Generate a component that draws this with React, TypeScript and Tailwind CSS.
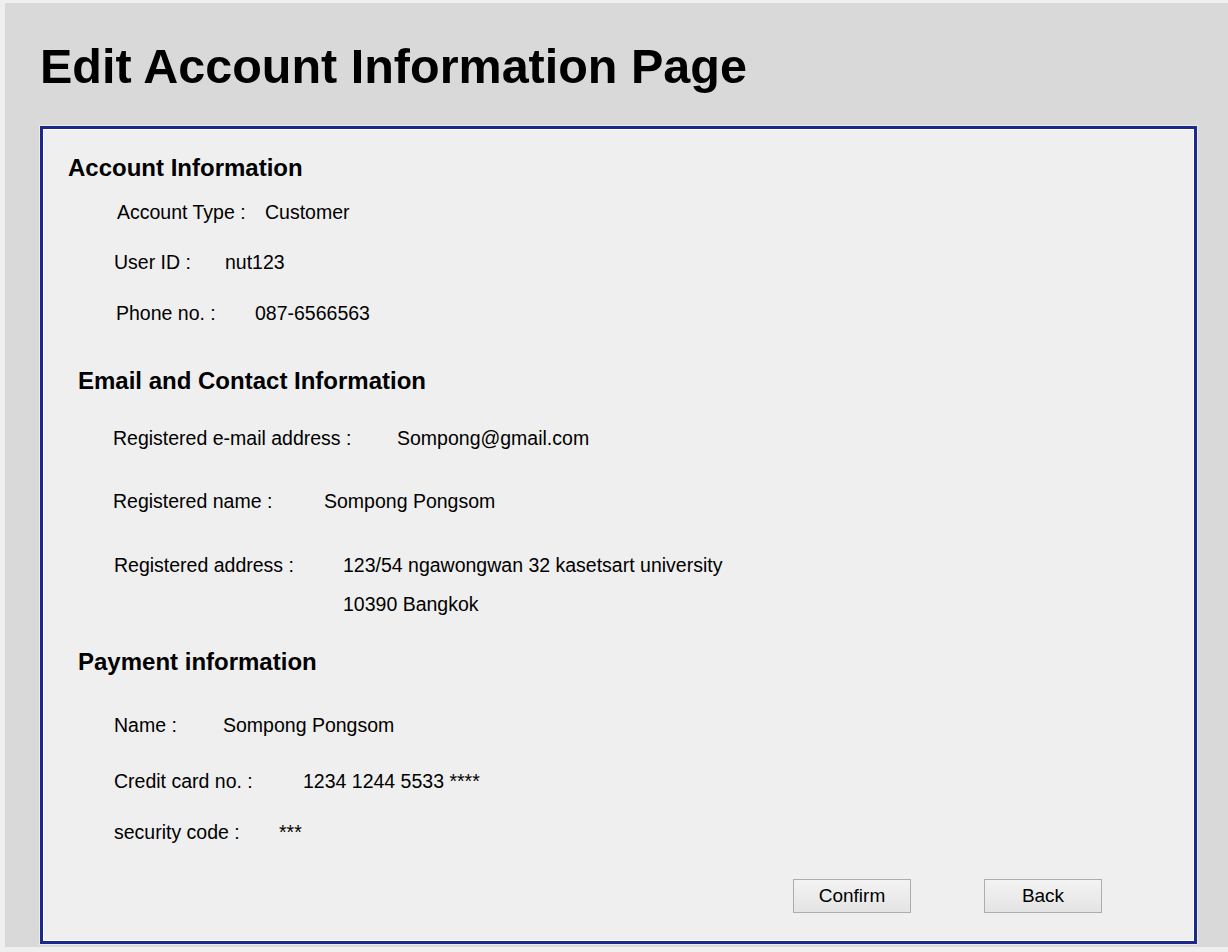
import React from "react";

const font = { fontFamily: '"Liberation Sans", Arial, sans-serif' };

const Row = ({
  label,
  value,
  className,
  labelClass,
}: {
  label: string;
  value: string;
  className: string;
  labelClass: string;
}) => (
  <div className={`flex items-center text-[19.5px] leading-[22px] text-black ${className}`}>
    <span className={labelClass}>{label}</span>
    <span>{value}</span>
  </div>
);

const Heading = ({ text, className }: { text: string; className: string }) => (
  <h2 className={`text-[24px] font-bold leading-[26px] text-black ${className}`}>{text}</h2>
);

export default function App() {
  return (
    <div className="min-h-[952px] w-full bg-[#efefef] pl-[5px] pt-[3px]" style={font}>
      <div className="h-[944px] w-full bg-[#d9d9d9] pl-[35px] pt-[35px]">
        <h1 className="text-[48.5px] font-bold leading-[56px] text-black">
          Edit Account Information Page
        </h1>
        <div className="mt-[32px] h-[818px] w-[1157px] border-[3px] border-[#1b2a8a] bg-[#efefef] shadow-[inset_0_0_0_1px_#ffffff,0_0_0_1px_#ecebe2] pl-[25px] pt-[26px]">
          <Heading text="Account Information" className="" />
          <Row label="Account Type :" value="Customer" className="mt-[20px] ml-[49px]" labelClass="w-[148px]" />
          <Row label="User ID :" value="nut123" className="mt-[28px] ml-[46px]" labelClass="w-[111px]" />
          <Row label="Phone no. :" value="087-6566563" className="mt-[29px] ml-[48px]" labelClass="w-[139px]" />

          <Heading text="Email and Contact Information" className="mt-[44px] ml-[10px]" />
          <Row
            label="Registered e-mail address :"
            value="Sompong@gmail.com"
            className="mt-[33px] ml-[45px]"
            labelClass="w-[284px]"
          />
          <Row
            label="Registered name :"
            value="Sompong Pongsom"
            className="mt-[41px] ml-[45px]"
            labelClass="w-[211px]"
          />
          <div className="mt-[42px] ml-[46px] flex text-[19.5px] leading-[22px] text-black">
            <span className="w-[229px]">Registered address :</span>
            <div className="flex flex-col gap-[17px]">
              <span>123/54 ngawongwan 32 kasetsart university</span>
              <span>10390 Bangkok</span>
            </div>
          </div>

          <Heading text="Payment information" className="mt-[34px] ml-[10px]" />
          <Row label="Name :" value="Sompong Pongsom" className="mt-[39px] ml-[46px]" labelClass="w-[109px]" />
          <Row
            label="Credit card no. :"
            value="1234 1244 5533 ****"
            className="mt-[34px] ml-[46px]"
            labelClass="w-[189px]"
          />
          <Row label="security code :" value="***" className="mt-[29px] ml-[46px]" labelClass="w-[165px]" />

          <div className="mt-[36px] flex justify-end gap-[73px] pr-[92px]">
            <button className="h-[34px] w-[118px] border border-[#adadad] bg-gradient-to-b from-[#f3f3f3] to-[#e4e4e4] text-[19px] text-black">
              Confirm
            </button>
            <button className="h-[34px] w-[118px] border border-[#adadad] bg-gradient-to-b from-[#f3f3f3] to-[#e4e4e4] text-[19px] text-black">
              Back
            </button>
          </div>
        </div>
      </div>
    </div>
  );
}
